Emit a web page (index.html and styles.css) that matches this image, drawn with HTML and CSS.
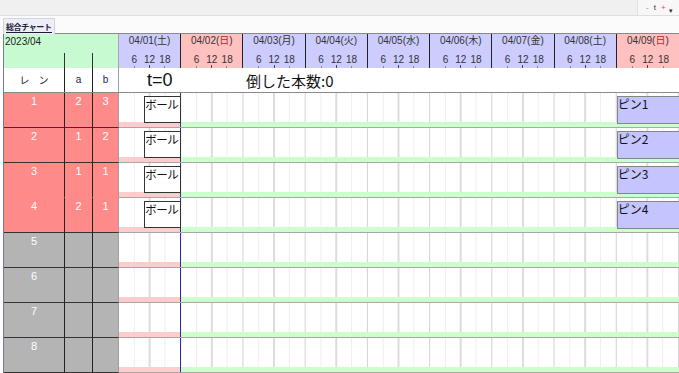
FILE: index.html
```html
<!DOCTYPE html>
<html lang="ja">
<head>
  <meta charset="UTF-8" />
  <title>総合チャート</title>
  <link rel="stylesheet" href="styles.css">
</head>
<body>
  <div class="toolbar">
    <div class="zoomctl"><span class="minus">-</span><span>t</span><span class="plus">+</span><span class="caret">▾</span></div>
  </div>
  <div class="tabs">
    <div class="tab">総合チャート</div>
  </div>
  <div class="sheet">
    <div class="head">
      <div class="head-left">
        <div class="month">2023/04</div>
        <div class="subcols"><div></div><div></div><div></div></div>
      </div>
      <div class="days">
        <div class="day"><div class="date">04/01(土)</div><div class="hours"><span>6</span><span>12</span><span>18</span></div></div>
        <div class="day sun"><div class="date">04/02(<b>日</b>)</div><div class="hours"><span>6</span><span>12</span><span>18</span></div></div>
        <div class="day"><div class="date">04/03(月)</div><div class="hours"><span>6</span><span>12</span><span>18</span></div></div>
        <div class="day"><div class="date">04/04(火)</div><div class="hours"><span>6</span><span>12</span><span>18</span></div></div>
        <div class="day"><div class="date">04/05(水)</div><div class="hours"><span>6</span><span>12</span><span>18</span></div></div>
        <div class="day"><div class="date">04/06(木)</div><div class="hours"><span>6</span><span>12</span><span>18</span></div></div>
        <div class="day"><div class="date">04/07(金)</div><div class="hours"><span>6</span><span>12</span><span>18</span></div></div>
        <div class="day"><div class="date">04/08(土)</div><div class="hours"><span>6</span><span>12</span><span>18</span></div></div>
        <div class="day sun"><div class="date">04/09(<b>日</b>)</div><div class="hours"><span>6</span><span>12</span><span>18</span></div></div>
      </div>
    </div>

    <div class="row labels">
      <div class="cell lane-name">レン</div>
      <div class="cell ab">a</div>
      <div class="cell ab">b</div>
      <div class="status"><span class="t">t=0</span><span class="fallen">倒した本数:0</span></div>
    </div>

    <div class="row lane active">
      <div class="cell">1</div><div class="cell">2</div><div class="cell">3</div>
      <div class="chart"><div class="ball">ボール</div><div class="pin">ピン1</div></div>
    </div>
    <div class="row lane active">
      <div class="cell">2</div><div class="cell">1</div><div class="cell">2</div>
      <div class="chart"><div class="ball">ボール</div><div class="pin">ピン2</div></div>
    </div>
    <div class="row lane active joined">
      <div class="cell">3</div><div class="cell">1</div><div class="cell">1</div>
      <div class="chart"><div class="ball">ボール</div><div class="pin">ピン3</div></div>
    </div>
    <div class="row lane active">
      <div class="cell">4</div><div class="cell">2</div><div class="cell">1</div>
      <div class="chart"><div class="ball">ボール</div><div class="pin">ピン4</div></div>
    </div>
    <div class="row lane">
      <div class="cell">5</div><div class="cell"></div><div class="cell"></div>
      <div class="chart"></div>
    </div>
    <div class="row lane">
      <div class="cell">6</div><div class="cell"></div><div class="cell"></div>
      <div class="chart"></div>
    </div>
    <div class="row lane">
      <div class="cell">7</div><div class="cell"></div><div class="cell"></div>
      <div class="chart"></div>
    </div>
    <div class="row lane">
      <div class="cell">8</div><div class="cell"></div><div class="cell"></div>
      <div class="chart"></div>
    </div>
  </div>
</body>
</html>
```

FILE: styles.css
```css
* {
  box-sizing: border-box;
}
body {
  margin: 0;
  font-family: "Liberation Sans", "Noto Sans CJK JP", sans-serif;
  background: #fff;
  color: #222;
  overflow: hidden;
}
.toolbar {
  height: 16px;
  background: #f0f0f0;
  border-bottom: 1px solid #dedede;
  display: flex;
  justify-content: flex-end;
}
.zoomctl {
  width: 42px;
  height: 15px;
  background: #f7f7f7;
  border-left: 1px solid #e2e2e2;
  display: flex;
  align-items: center;
  gap: 5px;
  padding-left: 8px;
  font-size: 8px;
  color: #333;
}
.zoomctl .minus {
  color: #888;
}
.zoomctl .plus {
  color: #e05050;
}
.zoomctl .caret {
  font-size: 7px;
  margin-top: 6px;
  margin-left: -2px;
}
.tabs {
  height: 17px;
  padding-left: 3px;
  background: #fbfbfb;
}
.tab {
  display: inline-block;
  height: 16px;
  margin-top: 1px;
  padding: 1px 2px 0;
  font-size: 8px;
  letter-spacing: -0.4px;
  font-weight: bold;
  font-family: "Noto Sans CJK JP", sans-serif;
  color: #1c1c3a;
  background: #eeeef6;
  border: 1px solid #d4d4e0;
  border-bottom: none;
  line-height: 13px;
}
.tab::after {
  content: "";
  display: block;
  height: 1px;
  background: #1c1c3a;
  margin-top: -1px;
}
.sheet {
  margin-left: 3px;
  border-left: 1px solid #7878a8;
  border-top: 1px solid #8a8a8a;
}

/* header */
.head {
  display: grid;
  grid-template-columns: 115px 1fr;
  height: 34px;
}
.head-left {
  background: #c8fad2;
  border-right: 1px solid #a8a8a8;
  display: flex;
  flex-direction: column;
}
.month {
  height: 19px;
  font-size: 10px;
  line-height: 14px;
  padding: 1px 0 0 1px;
  color: #222;
}
.subcols {
  flex: 1;
  display: grid;
  grid-template-columns: 61px 28px 1fr;
}
.subcols div {
  border-right: 1px solid #333;
}
.subcols div:last-child {
  border-right: none;
}
.days {
  display: grid;
  grid-template-columns: repeat(9, 1fr);
}
.day {
  background: #ccccff;
  border-right: 1px solid #222;
  display: flex;
  flex-direction: column;
}
.day:last-child {
  border-right: none;
}
.day.sun {
  background: #ffc0c0;
}
.date {
  height: 17px;
  font-size: 10px;
  line-height: 14px;
  text-align: center;
  color: #333;
}
.date b {
  font-weight: normal;
  color: #b03030;
}
.hours {
  flex: 1;
  display: grid;
  grid-template-columns: 1fr 1fr 1fr;
  padding: 3px 12.5% 0;
  font-size: 10px;
  line-height: 12px;
  color: #333;
  text-align: center;
  background:
    linear-gradient(#888, #888) 25% 100% / 1px 2px no-repeat,
    linear-gradient(#444, #444) 50% 100% / 1px 3px no-repeat,
    linear-gradient(#888, #888) 75% 100% / 1px 2px no-repeat;
}

/* rows */
.row {
  display: grid;
  grid-template-columns: 61px 28px 26px 1fr;
}
.cell {
  border-right: 1px solid #222;
  text-align: center;
  font-size: 11px;
}
.cell:nth-child(3) {
  border-right-color: #a0a0a0;
}
.labels {
  height: 25px;
  border-bottom: 1px solid #8a8a8a;
}
.labels .cell {
  line-height: 24px;
  color: #222;
  font-size: 10px;
}
.labels .lane-name {
  font-family: "Noto Sans CJK JP", sans-serif;
  letter-spacing: 9px;
  padding-left: 9px;
}
.labels .ab {
  color: #1a1a5a;
}
.status {
  display: flex;
  align-items: center;
  padding-left: 28px;
}
.status .t {
  font-size: 18px;
  width: 99px;
  color: #111;
}
.status .fallen {
  font-size: 15px;
  font-family: "Noto Sans CJK JP", sans-serif;
  color: #111;
}
.lane {
  height: 35px;
}
.lane .cell {
  background: #b4b4b4;
  color: #fff;
  padding-top: 2px;
  border-bottom: 1px solid #333;
}
.lane.active .cell {
  background: #ff8a8a;
}
.lane.joined .cell {
  border-bottom-color: #ff8a8a;
}
.chart {
  display: grid;
  grid-template-columns: repeat(9, 1fr);
  grid-template-rows: 100%;
  align-items: start;
  border-bottom: 1px solid #a8a8a8;
  background:
    linear-gradient(to right, #ffcccc 0 11.111%, #ccffcc 11.111%) 0 100% / 100% 5px no-repeat,
    linear-gradient(to right,
      transparent 0 calc(25% - 1px), #eeeeee calc(25% - 1px) 25%,
      transparent 25% calc(50% - 1px), #dcdcdc calc(50% - 1px) 50%,
      transparent 50% calc(75% - 1px), #eeeeee calc(75% - 1px) 75%,
      transparent 75% calc(100% - 1px), #d2d2d2 calc(100% - 1px)) 0 0 / calc(100% / 9) 100% repeat-x,
    #fff;
}
.chart::before {
  content: "";
  grid-column: 1;
  grid-row: 1;
  justify-self: end;
  align-self: stretch;
  width: 1px;
  background: #2a2aa8;
}
.ball {
  grid-column: 1;
  grid-row: 1;
  justify-self: end;
  width: 37px;
  height: 27px;
  margin-top: 3px;
  background: #fff;
  border: 1px solid #333;
  font-size: 11.5px;
  letter-spacing: -0.5px;
  white-space: nowrap;
  overflow: hidden;
  font-family: "Noto Sans CJK JP", sans-serif;
  line-height: 14px;
  color: #111;
}
.pin {
  grid-column: 9;
  grid-row: 1;
  height: 28px;
  margin-top: 3px;
  background: #c4c4ff;
  border: 1px solid #858585;
  border-right: none;
  font-size: 12px;
  font-family: "Noto Sans CJK JP", sans-serif;
  line-height: 14px;
  color: #111;
}
```
